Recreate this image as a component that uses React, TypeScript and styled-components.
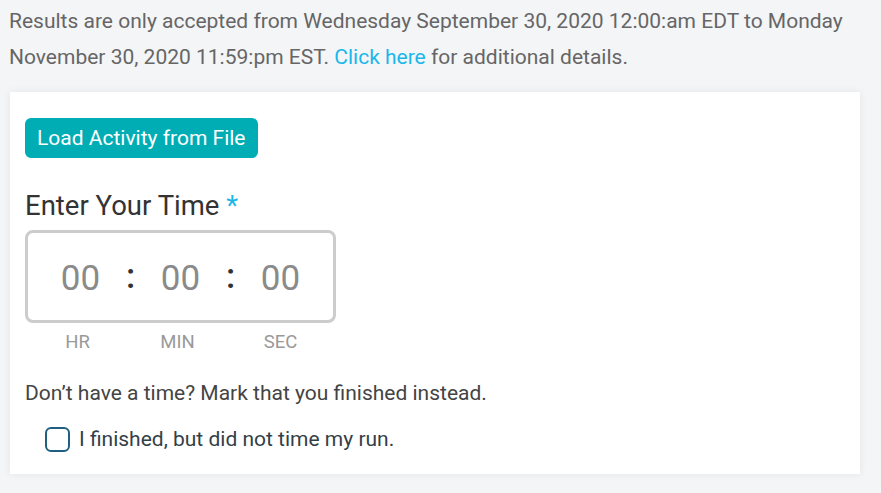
import React from "react";
import styled, { createGlobalStyle } from "styled-components";

const GlobalStyle = createGlobalStyle`
  html, body { margin: 0; padding: 0; background: #f4f5f7; }
  body { font-family: Roboto, "Noto Sans", Arial, sans-serif; }
  * { box-sizing: border-box; }
`;

const Page = styled.div`
  width: 881px;
  height: 493px;
  padding: 3px 21px 0 10px;
  background: #f4f5f7;
`;

const Notice = styled.p`
  margin: 0 0 17px -1px;
  font-size: 21px;
  line-height: 36px;
  color: #666666;
`;

const Link = styled.a`
  color: #1ab7ea;
  text-decoration: none;
`;

const Card = styled.div`
  background: #ffffff;
  box-shadow: 0 0 8px rgba(0, 0, 0, 0.07);
  padding: 26px 15px 22px 15px;
  display: flex;
  flex-direction: column;
  align-items: flex-start;
`;

const Button = styled.button`
  height: 40px;
  padding: 0 12px;
  border: none;
  border-radius: 6px;
  background: #00adb5;
  color: #ffffff;
  font-family: Roboto, Arial, sans-serif;
  font-size: 21px;
  cursor: pointer;
`;

const Heading = styled.h2`
  margin: 31px 0 0 0;
  font-size: 27.5px;
  font-weight: 400;
  line-height: 34px;
  color: #333333;
`;

const Required = styled.span`
  color: #1ab7ea;
`;

const TimeBox = styled.div`
  margin-top: 7px;
  width: 311px;
  height: 93px;
  border: 3px solid #cccccc;
  border-radius: 8px;
  padding: 3px 14px 0 14px;
  display: flex;
  align-items: center;
  justify-content: center;
`;

const Segment = styled.div`
  width: 76px;
  text-align: center;
  font-size: 35px;
  color: #8a8a8a;
`;

const Colon = styled.div`
  width: 24px;
  text-align: center;
  font-size: 35px;
  font-weight: 500;
  color: #333333;
  margin-top: -4px;
`;

const Labels = styled.div`
  width: 311px;
  padding: 0 14px;
  display: flex;
  justify-content: center;
  margin-top: 8px;
`;

const Label = styled.div<{ $shift?: number }>`
  width: 76px;
  margin-left: ${(p) => p.$shift ?? 0}px;
  text-align: center;
  font-size: 18.5px;
  line-height: 22px;
  color: #999999;
`;

const Spacer = styled.div`
  width: 24px;
`;

const Hint = styled.p`
  margin: 27px 0 0 0;
  font-size: 21px;
  line-height: 26px;
  color: #444444;
`;

const CheckRow = styled.label`
  margin: 20px 0 0 20px;
  display: flex;
  align-items: center;
  gap: 9px;
  font-size: 21px;
  line-height: 26px;
  color: #333f48;
`;

const Box = styled.span`
  width: 25px;
  height: 25px;
  border: 2px solid #1f5f80;
  border-radius: 6px;
  background: #ffffff;
`;

export default function App() {
  return (
    <>
      <GlobalStyle />
      <Page>
        <Notice>
          Results are only accepted from Wednesday September 30, 2020 12:00:am EDT to Monday
          November 30, 2020 11:59:pm EST. <Link href="#">Click here</Link> for additional details.
        </Notice>
        <Card>
          <Button>Load Activity from File</Button>
          <Heading>
            Enter Your Time <Required>*</Required>
          </Heading>
          <TimeBox>
            <Segment>00</Segment>
            <Colon>:</Colon>
            <Segment>00</Segment>
            <Colon>:</Colon>
            <Segment>00</Segment>
          </TimeBox>
          <Labels>
            <Label $shift={-3}>HR</Label>
            <Spacer />
            <Label>MIN</Label>
            <Spacer />
            <Label $shift={3}>SEC</Label>
          </Labels>
          <Hint>Don’t have a time? Mark that you finished instead.</Hint>
          <CheckRow>
            <Box />
            I finished, but did not time my run.
          </CheckRow>
        </Card>
      </Page>
    </>
  );
}
